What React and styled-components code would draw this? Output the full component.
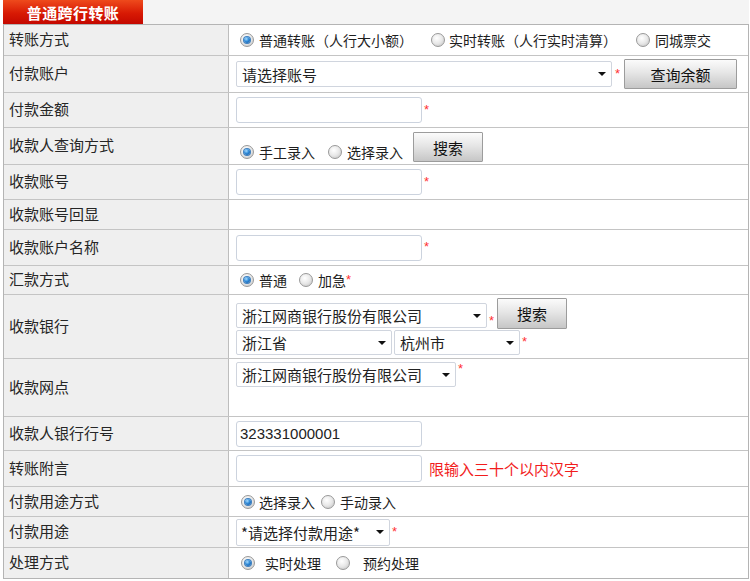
import React from 'react'
import styled, { createGlobalStyle, css } from 'styled-components'

const GlobalStyle = createGlobalStyle`
  html, body {
    margin: 0;
    padding: 0;
    background: #fff;
  }
  body {
    font-family: "Noto Sans CJK SC", "Liberation Sans", sans-serif;
    color: #222;
  }
`

const Page = styled.div`
  width: 746px;
  padding: 0 1px 3px 3px;
`

const TabBar = styled.div`
  height: 24px;
  background: #f4f4f4;
  display: flex;
`

const Tab = styled.div`
  width: 140px;
  height: 24px;
  background: linear-gradient(#ee4a1c, #d81a04 55%, #c40800);
  color: #fff;
  font-size: 15px;
  font-weight: bold;
  display: flex;
  align-items: center;
  justify-content: center;
  letter-spacing: 0.4px;
`

const Table = styled.div`
  border: 1px solid #b4b4b4;
  border-bottom: none;
  display: flex;
  flex-direction: column;
`

const Row = styled.div`
  display: grid;
  grid-template-columns: 225px 1fr;
  height: ${p => p.$h}px;
  box-sizing: border-box;
  border-bottom: 1px solid #c4c4c4;
  &:last-child {
    border-bottom-color: #b4b4b4;
  }
`

const Label = styled.div`
  background: #efefef;
  border-right: 1px solid #bdbdbd;
  padding: 0 0 3px 5px;
  font-size: 15px;
  color: #262626;
  display: flex;
  align-items: center;
  white-space: nowrap;
`

const Value = styled.div`
  display: flex;
  align-items: ${p => p.$align || 'center'};
  padding-left: 7px;
  font-size: 14px;
  white-space: nowrap;
  ${p => p.$align === 'flex-end' && css`padding-bottom: 2px;`}
  ${p => p.$align === 'flex-start' && css`padding-top: 3px;`}
`

const Stack = styled.div`
  display: flex;
  flex-direction: column;
  gap: 1px;
`

const Line = styled.div`
  display: flex;
  align-items: ${p => p.$align || 'center'};
`

const Option = styled.label`
  display: inline-flex;
  align-items: center;
  margin-left: ${p => p.$ml}px;
  gap: ${p => p.$gap}px;
  font-size: 14px;
  line-height: 20px;
  color: #1e1e1e;
`

const Dot = styled.span`
  width: 14px;
  height: 14px;
  box-sizing: border-box;
  border-radius: 50%;
  border: 1px solid #999;
  background: radial-gradient(circle at 40% 35%, #ffffff 0%, #e8e8e8 50%, #bdbdbd 100%);
  position: relative;
  flex: none;
  ${p => p.$checked && css`
    &::after {
      content: '';
      position: absolute;
      left: 3px;
      top: 3px;
      width: 6px;
      height: 6px;
      border-radius: 50%;
      background: radial-gradient(circle at 38% 32%, #a8dcff 0%, #2f8ad8 45%, #0a4c96 100%);
      box-shadow: 0 0 0 1px #3d7fbf;
    }
  `}
`

const Req = styled.span`
  color: #ff3030;
  font-family: "Liberation Sans", sans-serif;
  font-size: 13px;
  margin-left: ${p => p.$ml ?? 2}px;
  position: relative;
  top: -1px;
`

const Input = styled.div`
  width: 186px;
  height: 26px;
  box-sizing: border-box;
  border: 1px solid #ccd3de;
  border-radius: 3px;
  background: #fff;
  padding-left: 3px;
  display: flex;
  align-items: center;
  font-family: "Liberation Sans", sans-serif;
  font-size: 15px;
  color: #222;
`

const Select = styled.div`
  width: ${p => p.$w}px;
  height: ${p => p.$h || 25}px;
  box-sizing: border-box;
  border: 1px solid #d0d5de;
  border-radius: 2px;
  background: #fff;
  display: flex;
  align-items: center;
  justify-content: space-between;
  padding: 0 5px 0 ${p => p.$pl ?? 5}px;
  font-size: 15px;
  color: #222;
  margin-left: ${p => p.$ml || 0}px;
  &::after {
    content: '';
    border-left: 4px solid transparent;
    border-right: 4px solid transparent;
    border-top: 4px solid #111;
  }
`

const Button = styled.button`
  width: ${p => p.$w}px;
  height: ${p => p.$h || 30}px;
  margin-left: ${p => p.$ml}px;
  border: 1px solid #9c9c9c;
  border-radius: 1px;
  background: linear-gradient(#fbfbfb, #e6e6e6 45%, #c6c6c6);
  font-family: "Noto Sans CJK SC", sans-serif;
  font-size: 15px;
  color: #111;
  padding: 0;
  cursor: pointer;
`

const Hint = styled.span`
  color: #f21c1c;
  font-size: 15px;
  margin-left: 7px;
`

function Radio({ checked, ml, gap, children }) {
  return (
    <Option $ml={ml} $gap={gap}>
      <Dot $checked={checked} />
      {children}
    </Option>
  )
}

export default function App() {
  return (
    <Page>
      <GlobalStyle />
      <TabBar>
        <Tab>普通跨行转账</Tab>
      </TabBar>
      <Table>
        <Row $h={31}>
          <Label>转账方式</Label>
          <Value>
            <Radio checked ml={4} gap={5}>普通转账（人行大小额）</Radio>
            <Radio ml={18} gap={4}>实时转账（人行实时清算）</Radio>
            <Radio ml={19} gap={5}>同城票交</Radio>
          </Value>
        </Row>
        <Row $h={37}>
          <Label>付款账户</Label>
          <Value>
            <Select $w={376} $h={26}>请选择账号</Select>
            <Req $ml={3}>*</Req>
            <Button $w={113} $ml={4}>查询余额</Button>
          </Value>
        </Row>
        <Row $h={35}>
          <Label>付款金额</Label>
          <Value>
            <Input />
            <Req>*</Req>
          </Value>
        </Row>
        <Row $h={37}>
          <Label>收款人查询方式</Label>
          <Value $align="flex-end">
            <Radio checked ml={4} gap={5}>手工录入</Radio>
            <Radio ml={13} gap={5}>选择录入</Radio>
            <Button $w={70} $ml={10}>搜索</Button>
          </Value>
        </Row>
        <Row $h={35}>
          <Label>收款账号</Label>
          <Value>
            <Input />
            <Req>*</Req>
          </Value>
        </Row>
        <Row $h={30}>
          <Label>收款账号回显</Label>
          <Value />
        </Row>
        <Row $h={36}>
          <Label>收款账户名称</Label>
          <Value>
            <Input />
            <Req>*</Req>
          </Value>
        </Row>
        <Row $h={29}>
          <Label>汇款方式</Label>
          <Value>
            <Radio checked ml={4} gap={5}>普通</Radio>
            <Radio ml={12} gap={5}>加急</Radio>
            <Req $ml={0}>*</Req>
          </Value>
        </Row>
        <Row $h={64}>
          <Label>收款银行</Label>
          <Value>
            <Stack>
              <Line $align="flex-end">
                <Select $w={251} style={{ marginBottom: 1 }}>浙江网商银行股份有限公司</Select>
                <Req>*</Req>
                <Button $w={70} $h={31} $ml={3}>搜索</Button>
              </Line>
              <Line>
                <Select $w={156}>浙江省</Select>
                <Select $w={126} $ml={2}>杭州市</Select>
                <Req>*</Req>
              </Line>
            </Stack>
          </Value>
        </Row>
        <Row $h={58}>
          <Label>收款网点</Label>
          <Value $align="flex-start">
            <Select $w={220}>浙江网商银行股份有限公司</Select>
            <Req>*</Req>
          </Value>
        </Row>
        <Row $h={34}>
          <Label>收款人银行行号</Label>
          <Value>
            <Input>323331000001</Input>
          </Value>
        </Row>
        <Row $h={36}>
          <Label>转账附言</Label>
          <Value>
            <Input style={{ height: 27 }} />
            <Hint>限输入三十个以内汉字</Hint>
          </Value>
        </Row>
        <Row $h={30}>
          <Label>付款用途方式</Label>
          <Value>
            <Radio checked ml={5} gap={4}>选择录入</Radio>
            <Radio ml={6} gap={5}>手动录入</Radio>
          </Value>
        </Row>
        <Row $h={31}>
          <Label>付款用途</Label>
          <Value>
            <Select $w={154} $h={27} $pl={4}>*请选择付款用途*</Select>
            <Req>*</Req>
          </Value>
        </Row>
        <Row $h={31}>
          <Label>处理方式</Label>
          <Value>
            <Radio checked ml={5} gap={10}>实时处理</Radio>
            <Radio ml={15} gap={13}>预约处理</Radio>
          </Value>
        </Row>
      </Table>
    </Page>
  )
}
